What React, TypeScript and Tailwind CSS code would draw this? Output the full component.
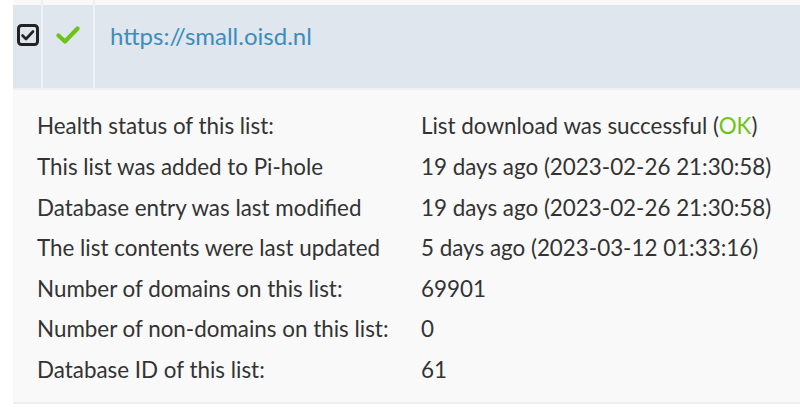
const details: [string, React.ReactNode][] = [
  [
    "Health status of this list:",
    <>
      List download was successful (<span className="text-[#6cc417]">OK</span>)
    </>,
  ],
  ["This list was added to Pi-hole", "19 days ago (2023-02-26 21:30:58)"],
  ["Database entry was last modified", "19 days ago (2023-02-26 21:30:58)"],
  ["The list contents were last updated", "5 days ago (2023-03-12 01:33:16)"],
  ["Number of domains on this list:", "69901"],
  ["Number of non-domains on this list:", "0"],
  ["Database ID of this list:", "61"],
];

function CheckboxIcon() {
  return (
    <svg width="22" height="22" viewBox="0 0 22 22">
      <rect x="1.5" y="1.5" width="19" height="19" rx="3" fill="none" stroke="#222" strokeWidth="3" />
      <path d="M5.5 11.5 L9 15 L16 7.5" fill="none" stroke="#222" strokeWidth="2.6" strokeLinecap="round" strokeLinejoin="round" />
    </svg>
  );
}

function GreenCheck() {
  return (
    <svg width="24" height="18" viewBox="0 0 24 18">
      <path d="M2.5 9.5 L9 15.5 L21.5 2.5" fill="none" stroke="#6cc417" strokeWidth="4.2" strokeLinecap="round" strokeLinejoin="round" />
    </svg>
  );
}

export default function App() {
  return (
    <div className="w-[800px] h-[407px] bg-white pl-[13px] font-['Lato','Noto_Sans',sans-serif] text-[22.4px] text-[#333] overflow-hidden">
      <div className="flex h-[5px] bg-[#f9f9f9]">
        <div className="w-[30px] border-r-2 border-[#eef0f3]" />
        <div className="w-[52px] border-r-2 border-[#eef0f3]" />
        <div className="flex-1" />
      </div>
      <div className="flex h-[85px] bg-[#dfe6ee] border-b-2 border-[#eef1f5]">
        <div className="w-[30px] border-r-2 border-[#eef1f5] flex items-start pt-[19px] pl-[4px]">
          <CheckboxIcon />
        </div>
        <div className="w-[52px] border-r-2 border-[#eef1f5] flex items-start pt-[21px] pl-[13px]">
          <GreenCheck />
        </div>
        <div className="flex-1 pl-[15px] pt-[15px]">
          <a className="text-[#3c8dbc] text-[24px] leading-[30px]">https://small.oisd.nl</a>
        </div>
      </div>
      <div className="bg-[#f9f9f9] h-[314px] pl-[24px] pt-[16px] border-b-2 border-[#eeeeee]">
        {details.map(([label, value], i) => (
          <div key={i} className="flex h-[40.6px] items-center">
            <div className="w-[384px]">{label}</div>
            <div>{value}</div>
          </div>
        ))}
      </div>
    </div>
  );
}
